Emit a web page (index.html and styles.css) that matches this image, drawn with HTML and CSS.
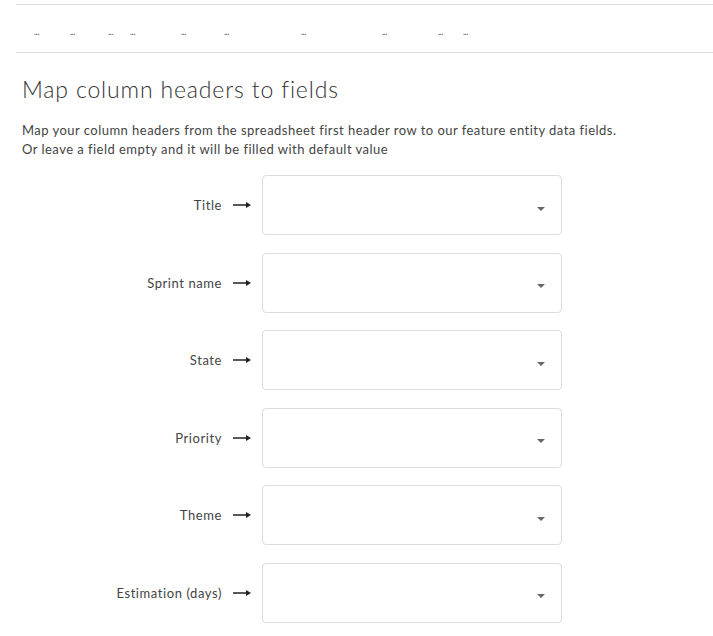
FILE: index.html
```html
<!DOCTYPE html>
<html>
<head>
<meta charset="utf-8">
<link rel="stylesheet" href="styles.css">
</head>
<body>
<div class="page">
  <div class="preview">
    <div class="cell">...</div>
    <div class="cell">...</div>
    <div class="cell">...</div>
    <div class="cell">...</div>
    <div class="cell">...</div>
    <div class="cell">...</div>
    <div class="cell">...</div>
    <div class="cell">...</div>
    <div class="cell">...</div>
    <div class="cell">...</div>
  </div>
  <div class="content">
    <h2 class="title">Map column headers to fields</h2>
    <p class="desc">Map your column headers from the spreadsheet first header row to our feature entity data fields.<br>Or leave a field empty and it will be filled with default value</p>
    <div class="rows">
      <div class="row"><span class="label">Title</span><svg class="arrow" width="18" height="8" viewBox="0 0 18 8"><path d="M0 4H15" stroke="#222" stroke-width="1.5"/><path d="M13 1L18 4L13 7Z" fill="#222"/></svg><div class="select"><span class="caret"></span></div></div>
      <div class="row"><span class="label">Sprint name</span><svg class="arrow" width="18" height="8" viewBox="0 0 18 8"><path d="M0 4H15" stroke="#222" stroke-width="1.5"/><path d="M13 1L18 4L13 7Z" fill="#222"/></svg><div class="select"><span class="caret"></span></div></div>
      <div class="row"><span class="label">State</span><svg class="arrow" width="18" height="8" viewBox="0 0 18 8"><path d="M0 4H15" stroke="#222" stroke-width="1.5"/><path d="M13 1L18 4L13 7Z" fill="#222"/></svg><div class="select"><span class="caret"></span></div></div>
      <div class="row"><span class="label">Priority</span><svg class="arrow" width="18" height="8" viewBox="0 0 18 8"><path d="M0 4H15" stroke="#222" stroke-width="1.5"/><path d="M13 1L18 4L13 7Z" fill="#222"/></svg><div class="select"><span class="caret"></span></div></div>
      <div class="row"><span class="label">Theme</span><svg class="arrow" width="18" height="8" viewBox="0 0 18 8"><path d="M0 4H15" stroke="#222" stroke-width="1.5"/><path d="M13 1L18 4L13 7Z" fill="#222"/></svg><div class="select"><span class="caret"></span></div></div>
      <div class="row"><span class="label">Estimation (days)</span><svg class="arrow" width="18" height="8" viewBox="0 0 18 8"><path d="M0 4H15" stroke="#222" stroke-width="1.5"/><path d="M13 1L18 4L13 7Z" fill="#222"/></svg><div class="select"><span class="caret"></span></div></div>
    </div>
  </div>
</div>
</body>
</html>
```
FILE: styles.css
```css
html, body {
  margin: 0;
  padding: 0;
  background: #fff;
}
body {
  font-family: "Lato", "Open Sans", sans-serif;
  color: #444;
  overflow: hidden;
}
.page {
  padding: 4px 0 0 16px;
}
.preview {
  display: grid;
  grid-template-columns: 54px 38px 22px 51px 43px 77px 81px 56px 25px 1fr;
  height: 47px;
  border-top: 1px solid #dedede;
  border-bottom: 1px solid #dedede;
  align-items: center;
}
.cell {
  font-size: 9px;
  letter-spacing: -0.5px;
  color: #555;
  padding-top: 6px;
}
.cell:first-child {
  padding-left: 18px;
}
.content {
  padding-left: 6px;
}
.title {
  margin: 22px 0 0;
  font-size: 23px;
  font-weight: 300;
  letter-spacing: 0.85px;
  color: #333;
  line-height: 28px;
}
.desc {
  margin: 18px 0 0;
  font-size: 13px;
  line-height: 19px;
  letter-spacing: 0.47px;
  color: #444;
}
.rows {
  margin-top: 16px;
  display: flex;
  flex-direction: column;
  gap: 17.6px;
}
.row {
  display: flex;
  align-items: center;
}
.label {
  width: 200px;
  text-align: right;
  font-size: 13px;
  letter-spacing: 0.58px;
  color: #444;
}
.arrow {
  margin: 0 11px;
  display: block;
}
.select {
  width: 282px;
  height: 58px;
  border: 1px solid #dcdcdc;
  border-radius: 4px;
  display: flex;
  align-items: center;
  justify-content: flex-end;
  padding-right: 16px;
}
.caret {
  width: 0;
  height: 0;
  border-left: 4px solid transparent;
  border-right: 4px solid transparent;
  border-top: 4px solid #666;
  margin-top: 7px;
}
```
